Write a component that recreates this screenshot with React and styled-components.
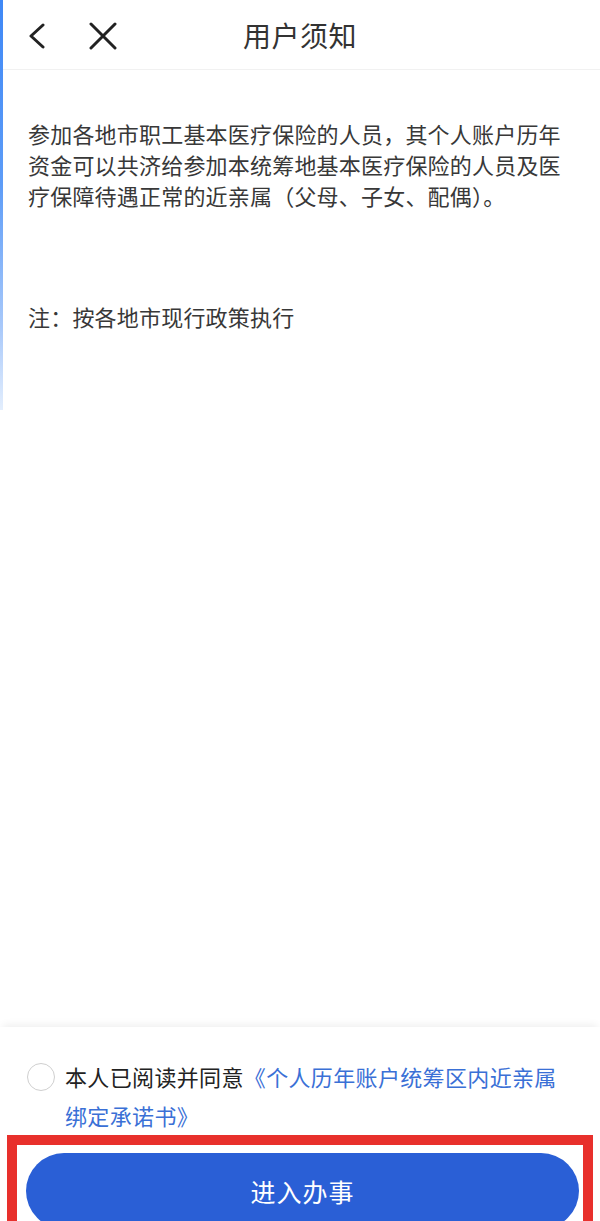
import React from "react";
import styled, { createGlobalStyle } from "styled-components";

const Global = createGlobalStyle`
  html, body { margin: 0; padding: 0; background: #ffffff; }
  body { font-family: "Noto Sans CJK SC", "Noto Sans", sans-serif; }
  * { box-sizing: border-box; }
`;

const Page = styled.div`
  position: relative;
  width: 600px;
  height: 1221px;
  overflow: hidden;
  display: flex;
  flex-direction: column;
  background: #ffffff;
`;

const EdgeStrip = styled.div`
  position: absolute;
  left: 0;
  top: 0;
  width: 3px;
  height: 410px;
  background: linear-gradient(180deg, #3f88f6 0%, #5d9cf7 45%, #a9c9fa 80%, #e3eefd 100%);
`;

const Header = styled.header`
  height: 70px;
  flex-shrink: 0;
  display: grid;
  grid-template-columns: 140px 1fr 140px;
  align-items: center;
  border-bottom: 1px solid #f1f1f1;
`;

const NavButtons = styled.div`
  display: flex;
  align-items: center;
  gap: 40px;
  padding-left: 26px;
  padding-top: 2px;
`;

const IconBtn = styled.span`
  display: flex;
  align-items: center;
  justify-content: center;
  color: #222;
`;

const Title = styled.h1`
  margin: 0;
  text-align: center;
  font-size: 28px;
  font-weight: 400;
  color: #333;
  line-height: 1;
  letter-spacing: 0.5px;
`;

const Content = styled.main`
  flex: 1;
  min-height: 0;
  padding: 48px 28px 0 28px;
`;

const Paragraph = styled.p`
  margin: ${(p) => (p.$gap ? `${p.$gap}px` : "0")} 0 0 0;
  font-size: 22px;
  line-height: 31px;
  color: #383838;
  letter-spacing: 0.2px;
`;

const Footer = styled.footer`
  flex-shrink: 0;
  margin-bottom: -8px;
  background: #ffffff;
  box-shadow: 0 -5px 8px -3px rgba(0, 0, 0, 0.07);
  padding-top: 30px;
`;

const AgreeRow = styled.div`
  display: flex;
  align-items: flex-start;
  padding: 0 36px 0 27px;
`;

const Radio = styled.span`
  flex-shrink: 0;
  width: 28px;
  height: 28px;
  margin-top: 6px;
  border-radius: 50%;
  border: 1.5px solid #cfcfcf;
  background: #fff;
`;

const AgreeText = styled.p`
  margin: 0 0 0 10px;
  font-size: 22px;
  line-height: 39px;
  letter-spacing: 0.35px;
  color: #222;
`;

const Link = styled.span`
  color: #3a70d6;
`;

const Highlight = styled.div`
  margin: 0 7px 0 7px;
  border: 10px solid #e8302c;
  border-bottom: none;
  padding: 8px 4px 0 9px;
`;

const PrimaryButton = styled.button`
  width: 100%;
  height: 76px;
  border: none;
  border-radius: 38px;
  background: #2a5fd6;
  color: #ffffff;
  font-family: "Noto Sans CJK SC", "Noto Sans", sans-serif;
  font-size: 25px;
  letter-spacing: 1px;
  display: flex;
  align-items: center;
  justify-content: center;
  padding: 0;
`;

const Back = () => (
  <svg width="22" height="26" viewBox="0 0 22 26" fill="none">
    <path d="M17 2 L5 13 L17 24" stroke="currentColor" strokeWidth="3" strokeLinecap="round" strokeLinejoin="round" />
  </svg>
);

const Close = () => (
  <svg width="30" height="28" viewBox="0 0 30 28" fill="none">
    <path d="M3 2 L27 26 M27 2 L3 26" stroke="currentColor" strokeWidth="3" strokeLinecap="round" />
  </svg>
);

export default function App() {
  return (
    <>
      <Global />
      <Page>
        <EdgeStrip />
        <Header>
          <NavButtons>
            <IconBtn><Back /></IconBtn>
            <IconBtn><Close /></IconBtn>
          </NavButtons>
          <Title>用户须知</Title>
          <div />
        </Header>
        <Content>
          <Paragraph>
            参加各地市职工基本医疗保险的人员，其个人账户历年资金可以共济给参加本统筹地基本医疗保险的人员及医疗保障待遇正常的近亲属（父母、子女、配偶）。
          </Paragraph>
          <Paragraph $gap={90}>注：按各地市现行政策执行</Paragraph>
        </Content>
        <Footer>
          <AgreeRow>
            <Radio />
            <AgreeText>
              本人已阅读并同意<Link>《个人历年账户统筹区内近亲属绑定承诺书》</Link>
            </AgreeText>
          </AgreeRow>
          <Highlight>
            <PrimaryButton>进入办事</PrimaryButton>
          </Highlight>
        </Footer>
      </Page>
    </>
  );
}
